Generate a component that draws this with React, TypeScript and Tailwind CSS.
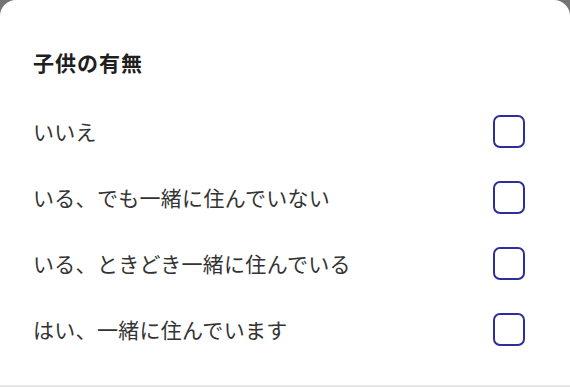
const options = [
  'いいえ',
  'いる、でも一緒に住んでいない',
  'いる、ときどき一緒に住んでいる',
  'はい、一緒に住んでいます',
];

export default function App() {
  return (
    <div className="w-[570px] h-[387px] bg-[#747474] overflow-hidden">
      <div
        className="h-full bg-white rounded-t-[16px] flex flex-col pl-[33px] pr-[45px] pt-[48px] border-b-2 border-[#e6e6e6]"
        style={{ fontFamily: '"Noto Sans CJK JP", "Noto Sans", sans-serif' }}
      >
        <h2 className="text-[21px] leading-[28px] font-bold text-[#1f1f1f] tracking-[1px]">
          子供の有無
        </h2>
        <ul className="mt-[22px] flex flex-col">
          {options.map((label) => (
            <li key={label} className="h-[66px] flex items-center justify-between">
              <span className="text-[21px] leading-[28px] text-[#333333] tracking-[0.3px]">
                {label}
              </span>
              <span className="w-[32px] h-[33px] rounded-[7px] border-2 border-[#2e2e9a] bg-white" />
            </li>
          ))}
        </ul>
      </div>
    </div>
  );
}
